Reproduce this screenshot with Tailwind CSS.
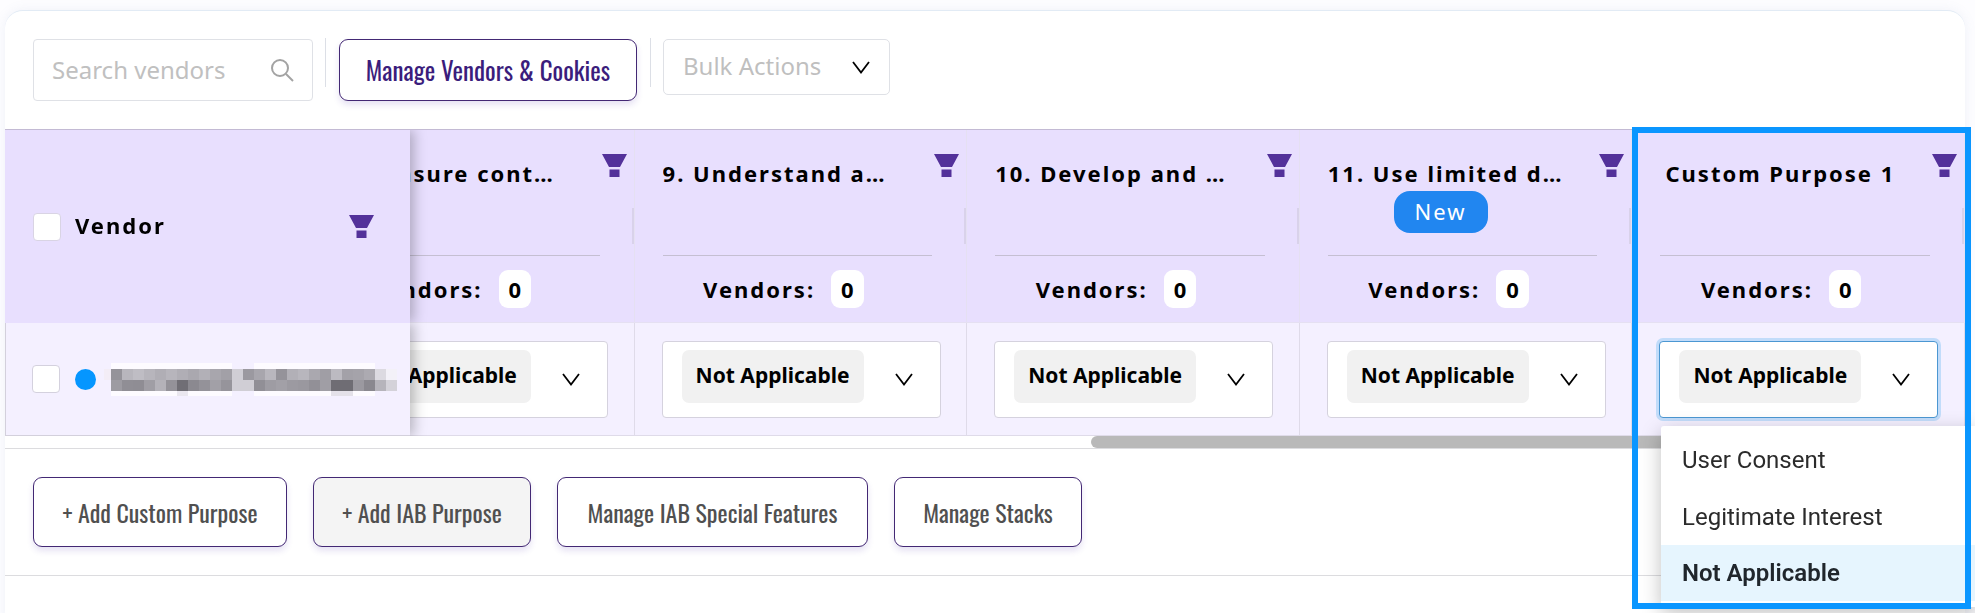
<!DOCTYPE html>
<html lang="en">
<head>
<meta charset="utf-8">
<title>Vendors</title>
<script src="https://cdn.jsdelivr.net/npm/@tailwindcss/browser@4"></script>
</head>
<body class="min-h-screen overflow-hidden bg-[#fdfdff] font-['Noto_Sans','Open_Sans',sans-serif] text-black">
<svg class="hidden">
  <symbol id="funnel" viewBox="0 0 25 23"><path d="M0 0H25L18 13H7ZM7.500 15.500H17.500V23H7.500Z" fill="#53319a"/></symbol>
  <symbol id="chevron" viewBox="0 0 18 13"><path d="M1 1L9 11.500L17 1" fill="none" stroke="#000" stroke-width="1.800"/></symbol>
</svg>

<main class="relative mt-[10px] mr-[10px] ml-[5px] h-screen rounded-t-[18px] border-t border-[#e2ebf5] bg-white shadow-[0_0_12px_rgba(120,140,190,0.10)]">
  <div class="flex h-[118px] items-start pt-7 pl-7">
    <div class="flex h-[62px] w-[280px] items-center rounded-[4px] border border-[#dfe1e6] pr-[18px] pl-[18px]">
      <input type="search" aria-label="Search vendors" placeholder="Search vendors" class="min-w-0 flex-1 text-2xl outline-none placeholder:text-[#c0c0c0]">
      <svg class="size-[23px]" viewBox="0 0 23 23" fill="none" stroke="#a3a3a3" stroke-width="2"><circle cx="9" cy="9" r="8"/><path d="M15 15L22 22"/></svg>
    </div>
    <span class="-mt-px ml-3 h-[49px] w-px bg-[#dcdfe6]"></span>
    <button class="ml-[13px] h-[62px] w-[298px] rounded-[9px] border border-[#432874] bg-white font-['Oswald'] text-[25px] font-normal text-[#3b1d7c] shadow-[0_4px_6px_rgba(80,50,170,0.14)]">Manage Vendors &amp; Cookies</button>
    <span class="-mt-px ml-[13px] h-[49px] w-px bg-[#dcdfe6]"></span>
    <div class="relative ml-3">
      <select aria-label="Bulk Actions" class="block h-[56px] w-[227px] appearance-none rounded-[5px] border border-[#dfe1e6] bg-white pb-0.5 pl-[19px] text-2xl text-[#bfbfbf]"><option>Bulk Actions</option></select>
      <svg class="pointer-events-none absolute top-[22px] right-5 h-[13px] w-[18px]"><use href="#chevron"/></svg>
    </div>
  </div>

  <div dir="rtl" class="overflow-hidden border-t border-[#c3bad4]">
    <table dir="ltr" class="w-[2068px] table-fixed border-separate border-spacing-0 text-[22px]">
      <colgroup><col class="w-[405px]"><col><col><col><col><col></colgroup>
      <thead>
        <tr id="heads" class="h-[193px] bg-[#e8dffe]">
          <th scope="col" class="sticky left-0 z-10 bg-[#e8dffe] p-0 shadow-[4px_0_12px_rgba(0,0,0,0.25)] [clip-path:inset(0_-20px_0_0)]">
            <div class="flex items-center pr-9 pl-7">
              <input type="checkbox" id="all" class="size-7 appearance-none rounded-[4px] border border-[#d9d4e4] bg-white">
              <label for="all" class="ml-3.5 pb-0.5 font-bold tracking-[2px]">Vendor</label>
              <button aria-label="Filter vendors" class="ml-auto"><svg class="h-[23px] w-[25px]"><use href="#funnel"/></svg></button>
            </div>
          </th>
        </tr>
      </thead>
      <tbody>
        <tr id="cells" class="h-[113px] bg-[#f4f0ff]">
          <td class="sticky left-0 z-10 border-b border-l border-[#d3d0dc] bg-[#f4f0ff] p-0 shadow-[4px_0_12px_rgba(0,0,0,0.25)] [clip-path:inset(0_-20px_0_0)]">
            <div class="flex items-center pl-[26px]">
              <input type="checkbox" aria-label="Select vendor" class="size-7 appearance-none rounded-[4px] border border-[#d4d1de] bg-white">
              <span class="ml-[15px] size-[21px] rounded-full bg-[#0596ff]"></span>
              <svg id="redacted" class="ml-2 h-[33px] w-[297px]" viewBox="0 0 297 33" shape-rendering="crispEdges" aria-hidden="true"></svg>
            </div>
          </td>
        </tr>
      </tbody>
    </table>
  </div>
  <div class="flex h-[13px] justify-end border-b border-[#dcdcdf]"><div class="w-[874px] max-w-full rounded-l-full bg-[#b9b9b9]"></div></div>

  <div class="flex h-[127px] items-center gap-[26px] border-b border-[#dcdcdf] pl-7 font-['Oswald'] text-2xl font-normal text-[#505050]">
    <button class="h-[70px] w-[254px] rounded-[9px] border border-[#432874] bg-white shadow-[0_4px_6px_rgba(80,50,170,0.14)]">+ Add Custom Purpose</button>
    <button class="h-[70px] w-[218px] rounded-[9px] border border-[#432874] bg-[#f4f4f4] shadow-[0_4px_6px_rgba(80,50,170,0.14)]">+ Add IAB Purpose</button>
    <button class="h-[70px] w-[311px] rounded-[9px] border border-[#432874] bg-white shadow-[0_4px_6px_rgba(80,50,170,0.14)]">Manage IAB Special Features</button>
    <button class="h-[70px] w-[188px] rounded-[9px] border border-[#432874] bg-white shadow-[0_4px_6px_rgba(80,50,170,0.14)]">Manage Stacks</button>
  </div>

  <ul role="listbox" aria-label="Custom Purpose 1" class="absolute top-[415px] -right-3 z-20 w-[316px] rounded-l-[3px] bg-white pb-1.5 font-['Roboto'] text-2xl text-[#2b2b2b] shadow-[0_6px_20px_rgba(0,0,0,0.25)]">
    <li role="option" class="flex h-[63px] items-center pt-1 pl-[21px]">User Consent</li>
    <li role="option" class="flex h-[56px] items-center pl-[21px]">Legitimate Interest</li>
    <li role="option" aria-selected="true" class="flex h-[56px] items-center bg-[#e6f5fe] pl-[21px] font-semibold text-[#20262c]">Not Applicable</li>
  </ul>
  <div class="pointer-events-none absolute top-[116px] -right-1.5 z-30 h-[482px] w-[339px] border-[6px] border-[#0a96ff]"></div>
</main>

<template id="head">
  <th scope="col" class="relative border-r border-b border-[#e5e0f2] p-0 text-left align-top font-normal">
    <div class="flex h-[61px] items-start justify-between pr-[7px] pl-7">
      <span class="name mt-7 w-60 overflow-hidden leading-[30px] font-bold tracking-[2px] whitespace-nowrap"></span>
      <button aria-label="Filter" class="mt-6"><svg class="h-[23px] w-[25px]"><use href="#funnel"/></svg></button>
    </div>
    <div class="mr-[34px] ml-7 flex h-[65px] justify-center border-b border-[#c5bfd2]"><span class="badge mr-11 h-[42px] rounded-[16px] bg-[#2186f0] px-[21px] leading-[40px] tracking-[2px] text-white">New</span></div>
    <div class="mr-[34px] ml-7 flex h-[66px] items-center justify-center pr-7 font-bold"><span class="mr-4 tracking-[2px]">Vendors:</span><span class="rounded-[9px] bg-white px-[10px] leading-[38px]">0</span></div>
    <span class="absolute top-[78px] right-0 h-9 w-0.5 bg-[#d9d2ea]"></span>
  </th>
</template>
<template id="cell">
  <td class="border-r border-b border-[#dfdbe9] p-0">
    <div class="box ml-[27px] flex h-[77px] w-[279px] items-start rounded-[4px] border border-[#d5d2de] bg-white">
      <select class="mt-2 ml-[19px] h-[53px] w-[182px] appearance-none rounded-[7px] bg-[#f1f1f1] pl-[14px] text-[21px] font-bold"><option>Not Applicable</option></select>
      <svg class="mt-[31px] ml-[31px] h-[13px] w-[18px]"><use href="#chevron"/></svg>
    </div>
  </td>
</template>

<script>
const purposes = ['8. Measure cont…', '9. Understand a…', '10. Develop and …', '11. Use limited d…', 'Custom Purpose 1'];
purposes.forEach((name, i) => {
  const h = document.getElementById('head').content.cloneNode(true);
  h.querySelector('.name').textContent = name;
  if (i === 4) h.querySelector('.name').classList.add('text-center');
  if (i !== 3) h.querySelector('.badge').remove();
  document.getElementById('heads').append(h);
  const c = document.getElementById('cell').content.cloneNode(true);
  c.querySelector('select').setAttribute('aria-label', name);
  if (i === 4) c.querySelector('.box').classList.add('border-[#4b97d2]!', 'shadow-[0_0_0_3px_#c2dcfa]');
  document.getElementById('cells').append(c);
});

/* Pixelated vendor name: greyscale blocks, two rows with pale rows above and below */
const rows = [
  [149, 184, 191, 183, 176, 183, 176, 170, 178, 168, 162, 208, 155, 168, 185, 149, 178, 184, 170, 160, 188, 163, 165, 172, 220, 243],
  [157, 144, 143, 160, 180, 148, 112, 139, 148, 162, 150, 208, 208, 145, 158, 162, 156, 154, 146, 160, 111, 111, 155, 138, 182, 212]
];
const svg = document.getElementById('redacted');
function block(x, y, w, h, color) {
  const r = document.createElementNS('http://www.w3.org/2000/svg', 'rect');
  Object.entries({x, y, width: w, height: h, fill: color}).forEach(([k, v]) => r.setAttribute(k, v));
  svg.append(r);
}
block(0, 6, 7, 11, '#f3edf6');
block(7, 0, 121, 6, '#fdfbff');
block(150, 0, 121, 6, '#fdfbff');
block(7, 28, 66, 5, '#fdfbff');
block(73, 28, 11, 5, '#eae7ef');
block(84, 28, 44, 5, '#fdfbff');
block(150, 28, 77, 5, '#fdfbff');
block(227, 28, 22, 5, '#e4e1e9');
block(249, 28, 22, 5, '#fdfbff');
rows.forEach((row, j) => row.forEach((v, i) => block(7 + 11 * i, 6 + 11 * j, 11, 11, `rgb(${v},${v - 2},${v + 5})`)));
</script>
</body>
</html>
